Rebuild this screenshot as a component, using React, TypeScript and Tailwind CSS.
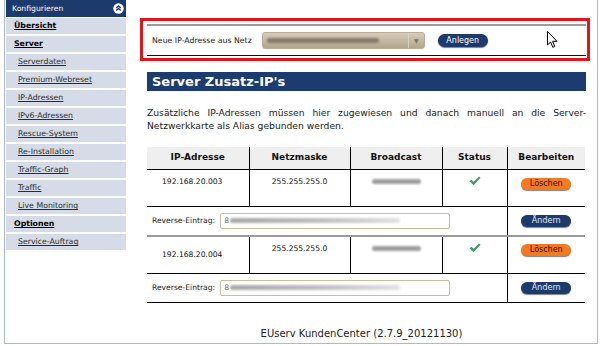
import React from "react";

const items: { t: string; b?: boolean }[] = [
  { t: "Übersicht", b: true },
  { t: "Server", b: true },
  { t: "Serverdaten" },
  { t: "Premium-Webreset" },
  { t: "IP-Adressen" },
  { t: "IPv6-Adressen" },
  { t: "Rescue-System" },
  { t: "Re-Installation" },
  { t: "Traffic-Graph" },
  { t: "Traffic" },
  { t: "Live Monitoring" },
  { t: "Optionen", b: true },
  { t: "Service-Auftrag" },
];

function Check() {
  return (
    <svg width="12" height="10" viewBox="0 0 11 9" className="inline-block">
      <path d="M0.5 4.8 L2.3 3.4 L4.2 5.3 L9.2 0.4 L10.6 1.6 L4.2 8.4 Z" fill="#3e9b6c" />
    </svg>
  );
}

function Blur({ w, c = "#9c9c9c" }: { w: number; c?: string }) {
  return <div className="h-[5px] rounded-full blur-[1px]" style={{ width: w, background: c }} />;
}

function Loeschen() {
  return (
    <button className="w-[50px] h-[12px] rounded-full bg-[#f47a1f] text-[#2a1400] text-[8px] leading-[12px] shadow-[0_1px_1px_rgba(0,0,0,0.5)]">
      Löschen
    </button>
  );
}

function Aendern() {
  return (
    <button className="w-[50px] h-[12px] rounded-full bg-[#1d3a6d] text-[#e4e8f0] text-[8px] leading-[12px] shadow-[0_1px_1px_rgba(0,0,0,0.5)]">
      Ändern
    </button>
  );
}

function ReverseInput() {
  return (
    <div className="ml-[5px] w-[230px] h-[16px] rounded-[2px] border border-[#cbbd9f] bg-white flex items-center pl-[3px] gap-[1px]">
      <span className="text-[7.6px] text-[#777]">8</span>
      <div className="h-[5px] w-[170px] blur-[1px] bg-gradient-to-r from-[#a8a8a8] via-[#bdbdbd] to-[#e2e2e2] rounded-full" />
    </div>
  );
}

export default function App() {
  return (
    <div className="relative w-[600px] h-[346px] bg-white overflow-hidden font-['DejaVu_Sans',Verdana,sans-serif]">
      <div className="ml-[4px] w-[594px] h-[344px] border-l border-r border-b border-[#a9b9d3] flex">
        {/* Sidebar */}
        <div className="w-[121px] pl-[1px] flex flex-col">
          <div className="h-[17px] bg-[#1d3a6d] flex items-center justify-between pl-[6px] pr-[2px]">
            <span className="text-white text-[7.7px]">Konfigurieren</span>
            <svg width="11" height="11" viewBox="0 0 11 11">
              <circle cx="5.5" cy="5.5" r="5.2" fill="#ffffff" />
              <path d="M3.2 5 L5.5 2.9 L7.8 5" stroke="#1d3a6d" strokeWidth="1.3" fill="none" />
              <path d="M3.2 7.6 L5.5 5.5 L7.8 7.6" stroke="#1d3a6d" strokeWidth="1.3" fill="none" />
            </svg>
          </div>
          <div className="mt-[1px] flex flex-col gap-[2px]">
            {items.map((it) => (
              <div
                key={it.t}
                className={
                  it.b
                    ? "h-[16px] bg-[#d5dce7] flex items-center pl-[8px] text-[7.8px] font-bold text-black underline"
                    : "h-[16px] bg-[#d5dce7] flex items-center pl-[12px] text-[7.8px] text-[#2b2b2b] underline"
                }
              >
                {it.t}
              </div>
            ))}
          </div>
        </div>

        {/* Main */}
        <div className="flex-1 flex flex-col pl-[21px] pr-[11px]">
          <div className="mt-[24px] h-[32px] border-t-2 border-t-[#9b9b9b] border-b border-b-[#111] flex items-center pl-[5px]">
            <span className="text-[7.8px] text-[#222]">Neue IP-Adresse aus Netz</span>
            <div className="ml-[10px] w-[163px] h-[17px] rounded-[3px] border border-[#b9ad97] bg-gradient-to-b from-[#d6ccb9] to-[#b2a58c] flex items-center">
              <div className="flex-1 pl-[4px]">
                <Blur w={112} c="#857a6a" />
              </div>
              <div className="w-[16px] h-full border-l border-[#d9d0c0] flex items-center justify-center text-[6px] text-[#7a7063]">
                ▼
              </div>
            </div>
            <button className="ml-[13px] w-[50px] h-[13px] rounded-full bg-[#1d3a6d] text-white text-[8px] leading-[13px] shadow-[0_1px_1px_rgba(0,0,0,0.5)]">
              Anlegen
            </button>
          </div>

          <div className="mt-[16px] h-[19px] bg-[#1c3b6e] flex items-center pl-[5px] text-white font-bold text-[13px]">
            Server Zusatz-IP's
          </div>

          <p className="mt-[15px] text-[9.2px] leading-[13px] text-[#222] text-justify">
            Zusätzliche IP-Adressen müssen hier zugewiesen und danach manuell an die Server-Netzwerkkarte als Alias gebunden werden.
          </p>

          <table className="mt-[15px] w-[438px] table-fixed border-collapse text-[#111]">
            <colgroup>
              <col className="w-[102px]" />
              <col className="w-[101px]" />
              <col className="w-[92px]" />
              <col className="w-[65px]" />
              <col className="w-[78px]" />
            </colgroup>
            <thead>
              <tr className="h-[22px] bg-[#efefef] border-b border-black text-[9px] font-bold">
                <th className="border-r border-black">IP-Adresse</th>
                <th className="border-r border-black">Netzmaske</th>
                <th className="border-r border-black">Broadcast</th>
                <th className="border-r border-black">Status</th>
                <th>Bearbeiten</th>
              </tr>
            </thead>
            <tbody className="text-[7.6px]">
              <tr className="h-[37px] border-b border-black align-top">
                <td className="border-r border-black pl-[15px] pt-[6px]">192.168.20.003</td>
                <td className="border-r border-black text-center pt-[6px]">255.255.255.0</td>
                <td className="border-r border-black pt-[9px]">
                  <div className="flex justify-center">
                    <Blur w={49} />
                  </div>
                </td>
                <td className="border-r border-black text-center pt-[6px]">
                  <Check />
                </td>
                <td className="text-center pt-[8px]">
                  <Loeschen />
                </td>
              </tr>
              <tr className="h-[30px] border-b-2 border-[#9a9a9a]">
                <td colSpan={4} className="border-r border-black pl-[5px]">
                  <div className="flex items-center">
                    <span className="text-[7.6px] text-[#222]">Reverse-Eintrag:</span>
                    <ReverseInput />
                  </div>
                </td>
                <td className="text-center">
                  <Aendern />
                </td>
              </tr>
              <tr className="h-[37px] border-b border-black align-top">
                <td className="border-r border-black pl-[15px] align-middle">192.168.20.004</td>
                <td className="border-r border-black text-center pt-[6px]">255.255.255.0</td>
                <td className="border-r border-black pt-[9px]">
                  <div className="flex justify-center">
                    <Blur w={49} />
                  </div>
                </td>
                <td className="border-r border-black text-center pt-[5px]">
                  <Check />
                </td>
                <td className="text-center pt-[7px]">
                  <Loeschen />
                </td>
              </tr>
              <tr className="h-[29px] border-b border-black">
                <td colSpan={4} className="border-r border-black pl-[5px]">
                  <div className="flex items-center">
                    <span className="text-[7.6px] text-[#222]">Reverse-Eintrag:</span>
                    <ReverseInput />
                  </div>
                </td>
                <td className="text-center">
                  <Aendern />
                </td>
              </tr>
            </tbody>
          </table>

          <div className="mt-[23px] -ml-[21px] -mr-[11px] text-center text-[10px] text-[#222]">
            EUserv KundenCenter (2.7.9_20121130)
          </div>
        </div>
      </div>

      {/* Red annotation box */}
      <div className="absolute left-[140px] top-[18px] w-[450px] h-[43px] border-[3px] border-[#e3151b]" />

      {/* Mouse cursor */}
      <svg className="absolute left-[547px] top-[31px]" width="12" height="18" viewBox="0 0 12 18">
        <path d="M0.5 0.5 L0.5 14 L3.6 11 L5.8 16.3 L7.8 15.4 L5.6 10.3 L10 10.3 Z" fill="#ffffff" stroke="#000000" strokeWidth="1" strokeLinejoin="round" />
      </svg>
    </div>
  );
}
